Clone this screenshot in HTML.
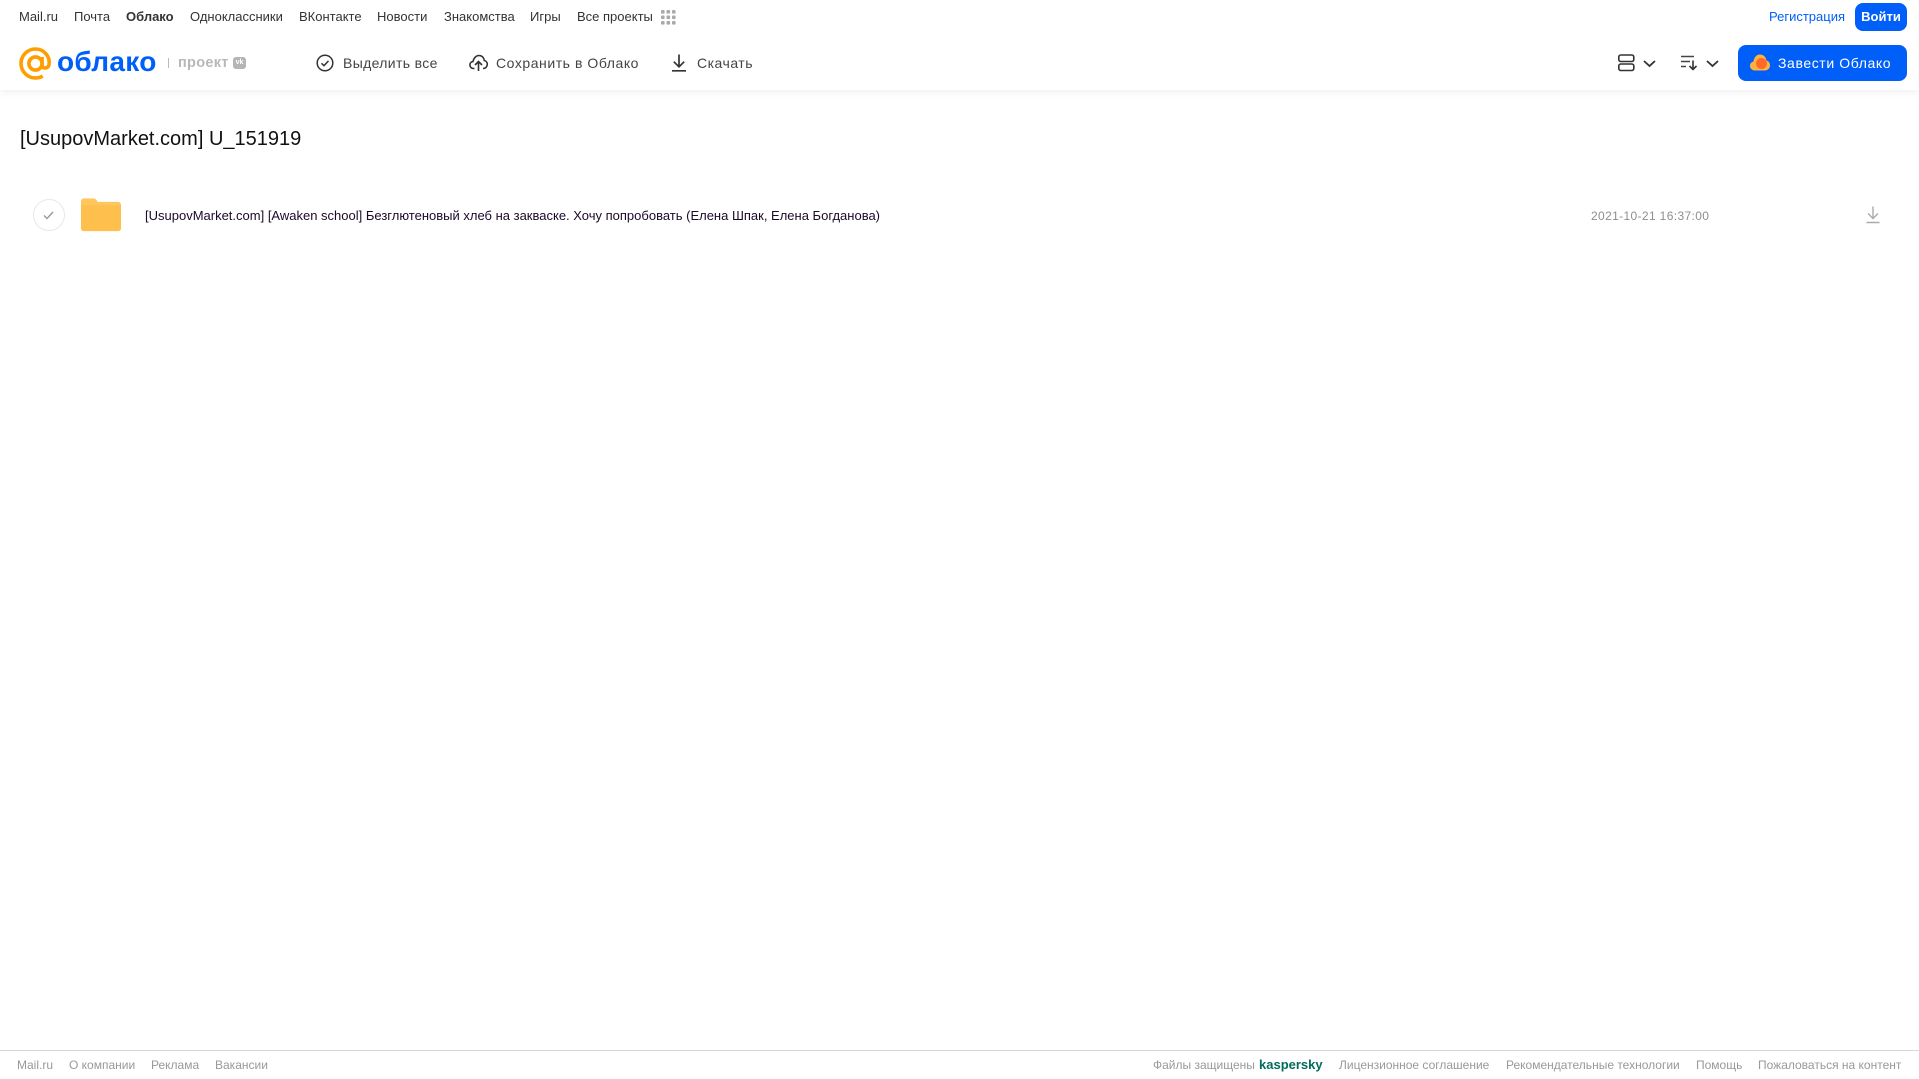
<!DOCTYPE html>
<html lang="ru"><head><meta charset="utf-8"><title>Облако</title>
<style>
html,body{margin:0;padding:0;width:1919px;height:1079px;overflow:hidden;background:#fff;font-family:"Liberation Sans",sans-serif}
.t{position:absolute;white-space:nowrap;line-height:16px}
.n{top:9px;font-size:13px;color:#333}
.b{top:55px;font-size:14px;color:#444;letter-spacing:.35px}
.f{top:1057px;font-size:12px;color:#999}
svg{position:absolute;overflow:visible}
</style></head><body>
<div style="position:absolute;left:0;top:0;width:1919px;height:90px;background:#fff;box-shadow:0 2px 8px rgba(0,0,0,.07)"></div>

<span class="t n" style="left:19px">Mail.ru</span>
<span class="t n" style="left:74px">Почта</span>
<span class="t n" style="left:126px;font-weight:bold">Облако</span>
<span class="t n" style="left:190px">Одноклассники</span>
<span class="t n" style="left:299px">ВКонтакте</span>
<span class="t n" style="left:377px">Новости</span>
<span class="t n" style="left:444px">Знакомства</span>
<span class="t n" style="left:530px">Игры</span>
<span class="t n" style="left:577px">Все проекты</span>
<svg style="left:661px;top:10px" width="15" height="15" fill="#aaa"><rect x="0" y="0" width="3.6" height="3.6" rx="1"/><rect x="5.5" y="0" width="3.6" height="3.6" rx="1"/><rect x="11" y="0" width="3.6" height="3.6" rx="1"/><rect x="0" y="5.5" width="3.6" height="3.6" rx="1"/><rect x="5.5" y="5.5" width="3.6" height="3.6" rx="1"/><rect x="11" y="5.5" width="3.6" height="3.6" rx="1"/><rect x="0" y="11" width="3.6" height="3.6" rx="1"/><rect x="5.5" y="11" width="3.6" height="3.6" rx="1"/><rect x="11" y="11" width="3.6" height="3.6" rx="1"/></svg>

<span class="t n" style="left:1769px;color:#005ff9">Регистрация</span>
<div class="t" style="left:1855px;top:3px;width:52px;height:28px;line-height:27px;background:#005ff9;border-radius:8px;color:#fff;font-size:13px;font-weight:bold;text-align:center">Войти</div>

<svg style="left:19px;top:47px" width="33" height="33" viewBox="0 0 33 33" fill="none" stroke="#ff9e00" stroke-width="3.6"><circle cx="16.5" cy="16.5" r="6.6"/><path d="M23.1 10v8.500c0 3.400 5.600 3.400 6.900-.6C31.500 9 24.500 2 16.500 2 8.500 2 2 8.500 2 16.500S8.500 31 16.500 31c2.700 0 5-.6 7.200-1.900"/></svg>
<span class="t" style="left:57px;top:44px;line-height:36px;font-size:28px;font-weight:bold;color:#005ff9;letter-spacing:.3px">облако</span>
<div style="position:absolute;left:168px;top:58px;width:1px;height:10px;background:#bbb"></div>
<span class="t" style="left:178px;top:55px;font-size:14.500px;font-weight:bold;color:#b8b8b8;letter-spacing:.3px">проект</span>
<div class="t" style="left:233px;top:57px;width:13px;height:12px;line-height:12px;background:#b5b5b5;border-radius:3px;color:#fff;font-size:7px;font-weight:bold;text-align:center">vk</div>

<svg style="left:316px;top:54px" width="18" height="18" viewBox="0 0 18 18" fill="none" stroke="#333" stroke-width="1.500"><circle cx="9" cy="9" r="7.800"/><path d="M5.500 9.300l2.500 2.400 4.500-4.800"/></svg>
<span class="t b" style="left:343px">Выделить все</span>
<svg style="left:469px;top:54px" width="19" height="18" viewBox="0 0 19 18" fill="none" stroke="#333" stroke-width="1.600"><path d="M5.500 14.500H4.500C2.300 14.500.9 12.900.9 11c0-1.800 1.300-3.200 3-3.400C4.500 4.600 6.800 1.500 10 1.500c3 0 5 2.300 5.300 5 1.700.4 3 1.900 3 3.800 0 2.300-1.700 4.200-4.300 4.200"/><path d="M9.500 17V8M6 11l3.500-3.500L13 11"/></svg>
<span class="t b" style="left:496px;letter-spacing:.55px">Сохранить в Облако</span>
<svg style="left:671px;top:54px" width="16" height="18" viewBox="0 0 16 18" fill="none" stroke="#333" stroke-width="1.700"><path d="M8 .5v12M2.800 7.700L8 12.800l5.200-5.100M1 16.800h14"/></svg>
<span class="t b" style="left:697px;letter-spacing:.5px">Скачать</span>

<svg style="left:1618px;top:54px" width="17" height="18" viewBox="0 0 17 18" fill="none" stroke="#333" stroke-width="1.600"><rect x=".8" y="1" width="15" height="6.500" rx="2"/><rect x=".8" y="10" width="15" height="6.500" rx="2"/></svg>
<svg style="left:1643px;top:60px" width="13" height="8" viewBox="0 0 13 8" fill="none" stroke="#333" stroke-width="1.800"><path d="M1 1l5.500 5L12 1"/></svg>
<svg style="left:1681px;top:55px" width="17" height="16" viewBox="0 0 17 16" fill="none" stroke="#444" stroke-width="1.400"><path d="M0 1.500h13M0 6.500h9M0 11.500h5"/><path d="M12 5.500v9M8.500 11l3.500 3.500 3.500-3.500" stroke="#333" stroke-width="1.600"/></svg>
<svg style="left:1706px;top:60px" width="13" height="8" viewBox="0 0 13 8" fill="none" stroke="#333" stroke-width="1.800"><path d="M1 1l5.500 5L12 1"/></svg>

<div class="t" style="left:1738px;top:45px;width:169px;height:36px;background:#005ff9;border-radius:8px"></div>
<svg style="left:1750px;top:54px" width="20" height="17" viewBox="0 0 20 17"><path d="M5 16.500C2 16.500 0 14.500 0 11.800 0 9.500 1.500 8 3.500 7.500 4 3.500 6.500 .5 10 .5c3.500 0 6 2.500 6.500 6 2 .5 3.500 2.200 3.500 4.800 0 3-2.200 5.200-5 5.200z" fill="#ffb33e"/><circle cx="11.500" cy="9.500" r="5.500" fill="#ff6a2b"/></svg>
<span class="t" style="left:1778px;top:55px;font-size:14px;color:#fff;letter-spacing:.6px">Завести Облако</span>

<span class="t" style="left:20px;top:126px;line-height:26px;font-size:20px;color:#111">[UsupovMarket.com] U_151919</span>

<div style="position:absolute;left:33px;top:199px;width:30px;height:30px;border:1px solid #e8e8e8;border-radius:50%"></div>
<svg style="left:43px;top:211px" width="11" height="9" viewBox="0 0 11 9" fill="none" stroke="#999" stroke-width="1.400"><path d="M1 4.500l3 3L10 1"/></svg>
<svg style="left:81px;top:197px" width="40" height="35" viewBox="0 0 41 35"><path d="M0 4a3 3 0 0 1 3-3h9c3 0 4 1.500 5 3.500h21a3 3 0 0 1 3 3V10H0z" fill="#ffc65e"/><path d="M0 8h41v24a2.500 2.500 0 0 1-2.500 2.500h-36A2.500 2.500 0 0 1 0 32z" fill="#ffbf4d"/></svg>
<span class="t" style="left:145px;top:208px;font-size:13px;color:#1a0a2a">[UsupovMarket.com] [Awaken school] Безглютеновый хлеб на закваске. Хочу попробовать (Елена Шпак, Елена Богданова)</span>
<span class="t" style="left:1591px;top:208px;font-size:12px;color:#8e8e8e;letter-spacing:.36px">2021-10-21 16:37:00</span>
<svg style="left:1866px;top:206px" width="14" height="18" viewBox="0 0 14 18" fill="none" stroke="#aaa" stroke-width="1.400"><path d="M7 .5v12M2 7.500l5 5 5-5M.5 16.500h13"/></svg>

<div style="position:absolute;left:0;top:1050px;width:1919px;height:1px;background:#d8d8d8"></div>
<span class="t f" style="left:17px">Mail.ru</span>
<span class="t f" style="left:69px">О компании</span>
<span class="t f" style="left:151px">Реклама</span>
<span class="t f" style="left:215px">Вакансии</span>
<span class="t f" style="left:1153px">Файлы защищены</span>
<span class="t f" style="left:1259px;font-size:13px;font-weight:bold;color:#006d5c">kaspersky</span>
<span class="t f" style="left:1339px">Лицензионное соглашение</span>
<span class="t f" style="left:1506px">Рекомендательные технологии</span>
<span class="t f" style="left:1696px">Помощь</span>
<span class="t f" style="left:1758px">Пожаловаться на контент</span>
</body></html>
